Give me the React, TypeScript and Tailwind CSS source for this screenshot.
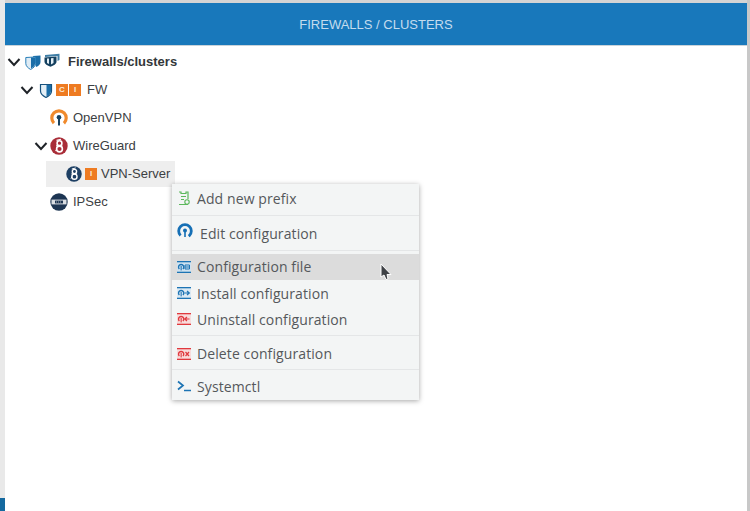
import type { ReactNode } from "react";

function Chevron() {
  return (
    <svg width="14" height="14" viewBox="0 0 14 14" className="shrink-0">
      <path d="M1.5 4 L7 10 L12.5 4" fill="none" stroke="#1f2328" strokeWidth="2" />
    </svg>
  );
}

function Shield() {
  return (
    <svg width="14" height="15" viewBox="0 0 14 15" className="shrink-0">
      <path d="M1.5 1.5 L12.5 1.5 L12.5 8 C12.5 11 10 13 7 14.5 C4 13 1.5 11 1.5 8Z" fill="#e4eff6" stroke="#17527e" strokeWidth="1.2" />
      <path d="M7.5 2 L12 2 L12 8 C12 10.5 10 12.4 7.5 13.6Z" fill="#1b6ea8" />
    </svg>
  );
}

function DoubleShield() {
  return (
    <svg width="16" height="15" viewBox="0 0 16 15" className="shrink-0">
      <path d="M8 1 L15.5 0.5 L15.5 7 C15.5 9.5 13.5 11 11 12Z" fill="#1b6ea8" />
      <path d="M.8 2.5 L10.5 2 L10.5 8.5 C10.5 11 8.5 13 5.6 14.5 C3 13 .8 11 .8 8.5Z" fill="#dfecf5" stroke="#2a7fb8" strokeWidth="1" />
      <path d="M6 2.6 L10 2.4 L10 8.5 C10 10.5 8.2 12.5 6 13.5Z" fill="#1b6ea8" />
    </svg>
  );
}

function Cluster() {
  return (
    <svg width="16" height="14" viewBox="0 0 16 14" className="shrink-0">
      <path d="M1 2 L15.5 .8 L15.5 7 L13.5 8 L13.5 3 L1 4Z" fill="#3f7ea6" />
      <path d="M.5 4.5 L12.5 3.6 L12.5 8.5 C12.5 11 9.5 12.7 6.5 13.7 C3.5 12.7 .5 11 .5 8.5Z" fill="#14405f" />
      <path d="M3 5.6 L5 5.5 L5 11 L3 10Z M7 5.3 L9.5 5.1 L9.5 10 L7 11.4Z" fill="#e4eff6" />
    </svg>
  );
}

function Badge({ letter }: { letter: string }) {
  return (
    <span className="flex h-[12px] w-[12px] shrink-0 items-center justify-center bg-[#ee7b22] font-['Liberation_Sans',sans-serif] text-[8px] font-bold leading-none text-[#fbe9d8]">
      {letter}
    </span>
  );
}

function OpenVpn() {
  return (
    <svg width="18" height="18" viewBox="0 0 18 18" className="shrink-0">
      <circle cx="9" cy="9" r="7.2" fill="none" stroke="#f08a2c" strokeWidth="3.2" strokeDasharray="34 11.2" transform="rotate(135 9 9)" />
      <circle cx="9" cy="8.2" r="2.3" fill="#17415f" />
      <rect x="8" y="9" width="2" height="7.5" fill="#17415f" />
    </svg>
  );
}

function Dragon({ color, size = 18 }: { color: string; size?: number }) {
  return (
    <svg width={size} height={size} viewBox="0 0 18 18" className="shrink-0">
      <circle cx="9" cy="9" r="8.7" fill={color} />
      <circle cx="9.5" cy="6.2" r="2.4" fill="none" stroke="#fff" strokeWidth="1.6" />
      <circle cx="9.5" cy="12" r="2.9" fill="none" stroke="#fff" strokeWidth="1.6" />
      <path d="M6.5 3.4 L11 2.2 M6 8.8 L12.5 9 M5.5 14 L7 12" stroke="#fff" strokeWidth="1.1" />
    </svg>
  );
}

function Ipsec() {
  return (
    <svg width="18" height="18" viewBox="0 0 18 18" className="shrink-0">
      <circle cx="9" cy="9" r="8.7" fill="#1d3552" />
      <rect x="1.5" y="6.6" width="15" height="4.8" fill="#d9dde2" />
      <rect x="5" y="7.6" width="8" height="2.8" fill="#1d3552" />
      <path d="M6 9 H12" stroke="#d9dde2" strokeWidth=".7" strokeDasharray="1 1" />
    </svg>
  );
}

function TreeRow({ indent, children }: { indent: string; children: ReactNode }) {
  return <div className={`flex h-[28px] items-center ${indent}`}>{children}</div>;
}

function Conf({ color, tint, mark }: { color: string; tint: string; mark: ReactNode }) {
  return (
    <svg width="14" height="12" viewBox="0 0 14 12" className="shrink-0">
      <rect width="14" height="12" fill={tint} />
      <rect width="14" height="1.3" fill={color} />
      <rect y="10.7" width="14" height="1.3" fill={color} />
      <path d="M2.4 8 A2.6 2.6 0 1 1 5.9 8" fill="none" stroke={color} strokeWidth="1.4" />
      <rect x="3.6" y="5" width="1.1" height="4.4" fill={color} />
      {mark}
    </svg>
  );
}

function MenuItem({ icon, label, h, active, iconGap }: { icon: ReactNode; label: string; h: string; active?: boolean; iconGap?: string }) {
  return (
    <div className={`flex ${h} items-center pl-[5px] ${active ? "bg-[#dcdcdc]" : ""}`}>
      <span className="flex w-[14px] justify-center">{icon}</span>
      <span className={`${iconGap ?? "ml-[6px]"} text-[14px] tracking-[0.1px] text-[#55585b]`}>{label}</span>
    </div>
  );
}

function Sep() {
  return <div className="h-px bg-[#e4e6e7]" />;
}

function ContextMenu() {
  return (
    <div className="absolute left-[172px] top-[184px] flex h-[216px] w-[247px] flex-col bg-[#f3f5f5] font-['Open_Sans',sans-serif] shadow-[0_1px_5px_rgba(0,0,0,0.35)]">
      <MenuItem
        h="h-[31px] pb-[1px]"
        label="Add new prefix"
        icon={
          <svg width="12" height="15" viewBox="0 0 12 15" className="-mt-[1px]">
            <path d="M1 1 H3 V2.5 H8 V1 H10 V8 M10 13.5 H1Z M3 5.5 H8 M3 8.5 H6" fill="none" stroke="#5cb85c" strokeWidth="1.2" />
            <circle cx="9" cy="11" r="2.2" fill="none" stroke="#5cb85c" strokeWidth="1.1" />
          </svg>
        }
      />
      <Sep />
      <MenuItem
        h="h-[34px] pt-[2px]"
        label="Edit configuration"
        iconGap="ml-[9px]"
        icon={
          <svg width="16" height="16" viewBox="0 0 16 16" className="-mt-[5px] ml-[1px] shrink-0">
            <circle cx="8" cy="8" r="6.3" fill="none" stroke="#156fb5" strokeWidth="2.8" strokeDasharray="30 9.6" transform="rotate(135 8 8)" />
            <circle cx="8" cy="7.5" r="2" fill="#156fb5" />
            <rect x="7.2" y="8" width="1.6" height="6" fill="#156fb5" />
          </svg>
        }
      />
      <Sep />
      <div className="h-[3px]" />
      <MenuItem
        h="h-[26px]"
        label="Configuration file"
        active
        icon={<Conf color="#1d74b4" tint="#cfe2f0" mark={<path d="M8 4 H12.5 V8 H8Z M8 6 H12.5" fill="none" stroke="#1d74b4" strokeWidth="1" />} />}
      />
      <MenuItem
        h="h-[27px]"
        label="Install configuration"
        icon={<Conf color="#1d74b4" tint="#dceaf4" mark={<path d="M7.5 6 H12 M10 4 L12.3 6 L10 8" fill="none" stroke="#1d74b4" strokeWidth="1.2" />} />}
      />
      <MenuItem
        h="h-[26px]"
        label="Uninstall configuration"
        icon={<Conf color="#e0393e" tint="#f8dcdc" mark={<path d="M12.5 6 H8 M10 4 L7.7 6 L10 8" fill="none" stroke="#e0393e" strokeWidth="1.2" />} />}
      />
      <div className="h-[3px]" />
      <Sep />
      <MenuItem
        h="h-[33px] pt-[2px]"
        label="Delete configuration"
        icon={<Conf color="#e0393e" tint="#f8dcdc" mark={<path d="M8.5 4 L12 8 M12 4 L8.5 8" fill="none" stroke="#e0393e" strokeWidth="1.2" />} />}
      />
      <Sep />
      <MenuItem
        h="h-[30px] pt-[2px]"
        label="Systemctl"
        icon={
          <svg width="14" height="12" viewBox="0 0 14 12">
            <path d="M1 1.5 L6 5.5 L1 9.5" fill="none" stroke="#1d74b4" strokeWidth="1.7" />
            <path d="M7 10.5 H14" stroke="#1d74b4" strokeWidth="1.5" />
          </svg>
        }
      />
    </div>
  );
}

export default function App() {
  return (
    <div className="relative flex h-[511px] w-[750px] overflow-hidden bg-white font-['Liberation_Sans',sans-serif]">
      <div className="flex w-[5px] shrink-0 flex-col bg-[#e9e9e9]">
        <div className="flex-1" />
        <div className="h-[13px] bg-[#14699f]" />
      </div>
      <div className="flex min-w-0 flex-1 flex-col">
        <div className="h-[3px] bg-[#d4d4d4]" />
        <header className="flex h-[42px] items-center justify-center bg-[#1878bb] pt-[1px] text-[13px] text-[#c4dcee]">
          FIREWALLS / CLUSTERS
        </header>
        <div className="h-px bg-[#c9d3da]" />
        <div className="flex flex-col pt-[2px] text-[13px] text-[#3c4043]">
          <TreeRow indent="pl-[2px]">
            <Chevron />
            <span className="ml-[4px]"><DoubleShield /></span>
            <span className="ml-[3px] -mt-[4px]"><Cluster /></span>
            <span className="ml-[8px] text-[13px] font-bold text-[#33373a]">Firewalls/clusters</span>
          </TreeRow>
          <TreeRow indent="pl-[15px]">
            <Chevron />
            <span className="ml-[5px]"><Shield /></span>
            <span className="ml-[3px] flex gap-[1px]">
              <Badge letter="C" />
              <Badge letter="I" />
            </span>
            <span className="ml-[6px]">FW</span>
          </TreeRow>
          <TreeRow indent="pl-[45px]">
            <OpenVpn />
            <span className="ml-[5px]">OpenVPN</span>
          </TreeRow>
          <TreeRow indent="pl-[29px]">
            <Chevron />
            <span className="ml-[2px]"><Dragon color="#a92d38" /></span>
            <span className="ml-[5px]">WireGuard</span>
          </TreeRow>
          <TreeRow indent="pl-[41px]">
            <div className="flex h-[26px] w-[129px] items-center bg-[#eeeeee] pl-[20px]">
              <Dragon color="#1d3f63" size={16} />
              <span className="ml-[3px]"><Badge letter="I" /></span>
              <span className="ml-[4px]">VPN-Server</span>
            </div>
          </TreeRow>
          <TreeRow indent="pl-[45px]">
            <Ipsec />
            <span className="ml-[5px]">IPSec</span>
          </TreeRow>
        </div>
      </div>
      <div className="w-[3px] shrink-0 bg-[#c8c8c8]" />
      <ContextMenu />
      <svg width="13" height="18" viewBox="0 0 13 18" className="absolute left-[380px] top-[263px]">
        <path d="M1 1 L1 14 L4 12 L6 16.5 L8 16 L7 11.5 L11 11.5Z" fill="#3f4246" stroke="#fff" strokeWidth="1" />
      </svg>
    </div>
  );
}
